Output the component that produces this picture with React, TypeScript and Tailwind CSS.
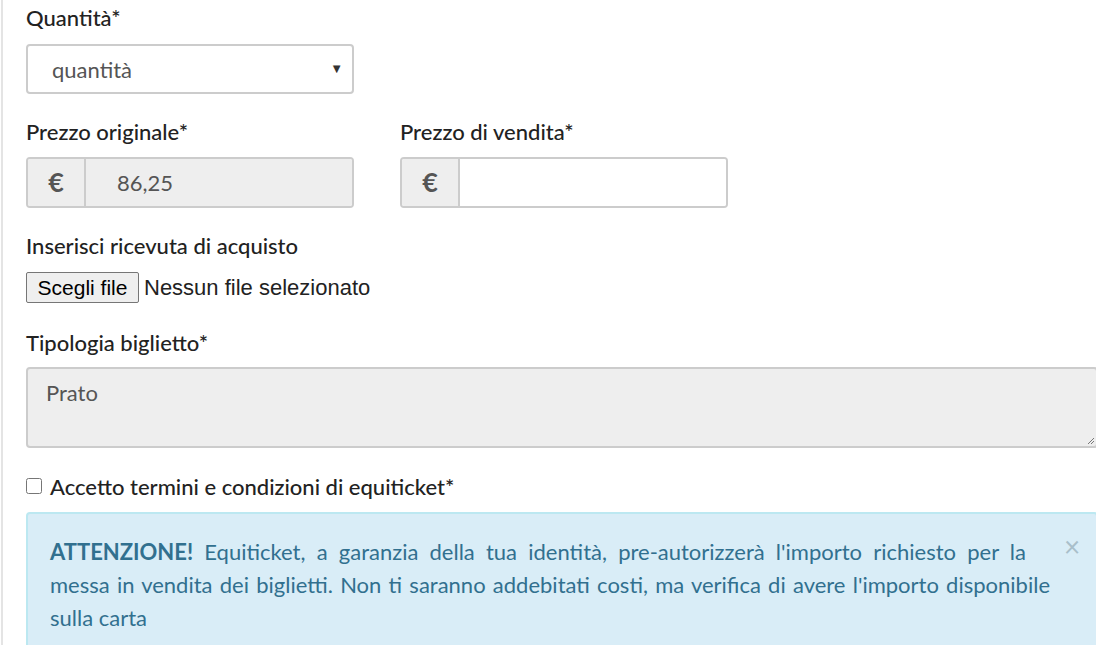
import { useState } from 'react';

const LATO = { fontFamily: 'Lato, "Open Sans", sans-serif' };
const ARIAL = { fontFamily: '"Liberation Sans", Arial, sans-serif' };

function Label({ children }: { children: React.ReactNode }) {
  return <label className="block text-[22px] font-medium leading-[30px] text-[#222]">{children}</label>;
}

function EuroInput({ value, disabled }: { value?: string; disabled?: boolean }) {
  return (
    <div className="flex h-[51px] w-[328px] overflow-hidden rounded-[4px] border-2 border-[#ccc]">
      <span className="flex w-[58px] items-center justify-center border-r-2 border-[#ccc] bg-[#eee] text-[27px] font-bold text-[#555]">
        €
      </span>
      <div
        className={
          'flex flex-1 items-center pl-[31px] text-[22px] text-[#555] ' + (disabled ? 'bg-[#eee]' : 'bg-white')
        }
      >
        {value}
      </div>
    </div>
  );
}

export default function App() {
  const [accepted, setAccepted] = useState(false);

  return (
    <div className="h-[645px] w-[1096px] overflow-hidden bg-white" style={LATO}>
      <div className="ml-[1px] h-full w-[1100px] border-l-2 border-[#e4e4e4] pl-[23px] pt-[3px]">
        {/* quantita */}
        <Label>Quantità*</Label>
        <div className="mt-[11px] flex h-[50px] w-[328px] items-center justify-between rounded-[4px] border-2 border-[#ccc] pl-[24px] pr-[9px] text-[22px] text-[#555]">
          <span>quantità</span>
          <span className="text-[13px] text-[#333]">▼</span>
        </div>

        {/* prezzi */}
        <div className="mt-[23px] grid grid-cols-[374px_374px]">
          <div>
            <Label>Prezzo originale*</Label>
            <div className="mt-[10px]">
              <EuroInput value="86,25" disabled />
            </div>
          </div>
          <div>
            <Label>Prezzo di vendita*</Label>
            <div className="mt-[10px]">
              <EuroInput />
            </div>
          </div>
        </div>

        {/* ricevuta */}
        <div className="mt-[23px]">
          <Label>Inserisci ricevuta di acquisto</Label>
          <div className="mt-[10px] flex items-center" style={ARIAL}>
            <button className="h-[31px] w-[113px] rounded-[2px] border border-[#767676] bg-[#efefef] text-[21px] leading-none text-black">
              Scegli file
            </button>
            <span className="ml-[5px] text-[22px] text-[#222]">Nessun file selezionato</span>
          </div>
        </div>

        {/* tipologia */}
        <div className="mt-[24px]">
          <Label>Tipologia biglietto*</Label>
          <div className="relative mt-[9px] h-[81px] w-[1072px] rounded-[4px] border-2 border-[#ccc] bg-[#eee] px-[18px] pt-[9px] text-[22px] leading-[30px] text-[#555]">
            Prato
            <svg className="absolute bottom-[1px] right-[1px]" width="8" height="8" viewBox="0 0 8 8">
              <path d="M7 1 L1 7 M7 4 L4 7" stroke="#777" strokeWidth="1" />
            </svg>
          </div>
        </div>

        {/* termini */}
        <label className="mt-[23px] flex h-[30px] items-center text-[22px] font-medium text-[#222]">
          <input
            type="checkbox"
            checked={accepted}
            onChange={(e) => setAccepted(e.target.checked)}
            className="mr-[8px] h-[16px] w-[16px]"
          />
          Accetto termini e condizioni di equiticket*
        </label>

        {/* avviso */}
        <div className="mt-[11px] w-[1072px] rounded-[4px] border-2 border-[#bce8f1] bg-[#d9edf7] pb-[20px] pl-[22px] pr-[46px] pt-[21px] text-[22px] leading-[33px] text-[#31708f]">
          <button className="relative -right-[34px] top-[-5px] float-right w-[24px] text-[28px] leading-[33px] text-[#a9bfca]">
            ×
          </button>
          <p className="text-justify">
            <strong className="font-bold">ATTENZIONE!</strong> Equiticket, a garanzia della tua identità,
            pre-autorizzerà l'importo richiesto per la messa in vendita dei biglietti. Non ti saranno addebitati
            costi, ma verifica di avere l'importo disponibile sulla carta
          </p>
        </div>
      </div>
    </div>
  );
}
